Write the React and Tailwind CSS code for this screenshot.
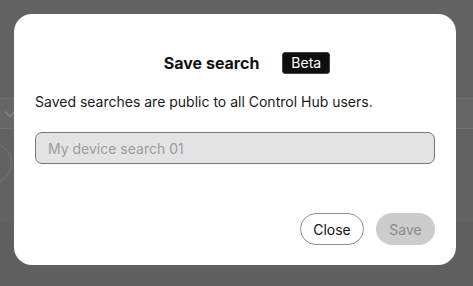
import React from 'react';

export default function App() {
  return (
    <div
      className="relative h-[286px] w-[473px] overflow-hidden bg-[#636363]"
      style={{ fontFamily: 'Inter, "Noto Sans", sans-serif' }}
    >
      {/* Page behind the dimmed overlay */}
      <div className="flex h-full flex-col">
        <div className="h-[98px]" />
        <div className="flex h-[31px] items-center border-y border-[#707070] bg-[#666666] pl-[4px]">
          <svg width="12" height="8" viewBox="0 0 12 8" fill="none">
            <path d="M1 1.5 L6 6.5 L11 1.5" stroke="#8a8a8a" strokeWidth="1.2" />
          </svg>
        </div>
        <div className="h-[14px]" />
        <div className="ml-[-28px] h-[40px] w-[40px] rounded-full border border-[#757575]" />
        <div className="h-[40px]" />
        <div className="flex-1 bg-[#5f5f5f]" />
      </div>

      {/* Modal */}
      <div className="absolute inset-0 flex items-start justify-start pl-[14px] pt-[14px]">
        <div className="flex h-[251px] w-[442px] flex-col rounded-[18px] bg-white px-[21px] pt-[38px]">
          <div className="flex h-[22px] items-center justify-center gap-[23px] pl-[24px]">
            <span className="text-[16px] font-bold leading-[22px] text-[#121212]">Save search</span>
            <span className="flex h-[22px] items-center rounded-[3px] border border-[#444] bg-[#0f0f0f] px-[8px] text-[14px] leading-none text-white">
              Beta
            </span>
          </div>
          <p className="mt-[18px] text-[14px] leading-[20px] text-[#1a1a1a]">
            Saved searches are public to all Control Hub users.
          </p>
          <div className="mt-[20px] flex h-[32px] items-center rounded-[7px] border border-[#777777] bg-[#e3e3e3] px-[12px]">
            <span className="text-[14px] text-[#9c9c9c]">My device search 01</span>
          </div>
          <div className="mt-[49px] flex justify-end gap-[12px]">
            <button className="flex h-[32px] w-[64px] items-center justify-center rounded-full border border-[#8f8f8f] bg-white text-[14px] text-[#121212]">
              Close
            </button>
            <button className="flex h-[32px] w-[59px] items-center justify-center rounded-full bg-[#cccccc] text-[14px] text-[#8a8a8a]">
              Save
            </button>
          </div>
        </div>
      </div>
    </div>
  );
}
